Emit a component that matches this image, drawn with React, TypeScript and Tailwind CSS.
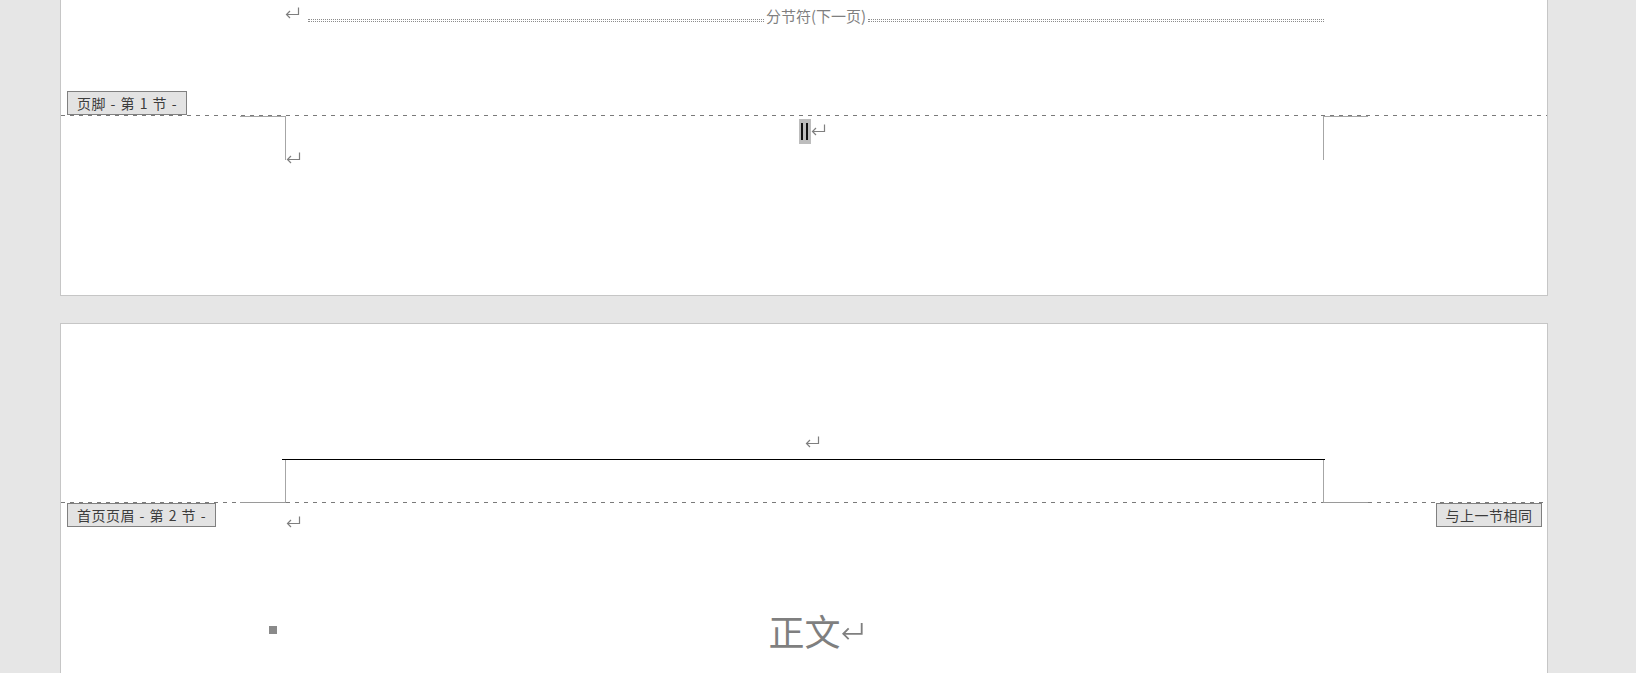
const cjk = "font-['Noto_Sans_CJK_SC','Liberation_Sans',sans-serif]";

function ReturnMark({ w = 15, h = 12 }: { w?: number; h?: number }) {
  return (
    <svg width={w} height={h} viewBox="0 0 15 12" fill="none" className="block shrink-0">
      <path d="M13.5 0.5V7.5H1.5" stroke="#7f7f7f" strokeWidth="1.2" />
      <path d="M5 4L1.5 7.5L5 11" stroke="#7f7f7f" strokeWidth="1.2" />
    </svg>
  );
}

function SectionLabel({ text, className = "" }: { text: string; className?: string }) {
  return (
    <div
      className={`flex h-[24px] shrink-0 items-center justify-center whitespace-pre border border-[#808080] bg-[#e3e3e3] text-[14px] leading-none tracking-[0.5px] text-[#3c3c3c] [word-spacing:1px] ${className}`}
    >
      {text}
    </div>
  );
}

const dashed =
  "h-[1px] bg-[repeating-linear-gradient(to_right,#7a7a7a_0_4px,transparent_4px_9px)]";

export default function App() {
  return (
    <div className={`h-[673px] w-[1636px] overflow-hidden bg-[#e6e6e6] ${cjk}`}>
      {/* page 1, bottom part with footer */}
      <div className="ml-[60px] flex h-[296px] w-[1488px] flex-col border-x border-b border-[#c6c6c6] bg-white">
        <div className="flex h-[30px] pl-[224px] pr-[223px]">
          <div className="mt-[7px]">
            <ReturnMark />
          </div>
          <div className="ml-[8px] mt-[6px] flex h-[20px] flex-1 items-start">
            <div className="mt-[13px] h-[3px] flex-1 border-y border-dotted border-[#8c8c8c]" />
            <span className="px-[2px] text-[15px] leading-[20px] text-[#7f7f7f]">分节符(下一页)</span>
            <div className="mt-[13px] h-[3px] flex-1 border-y border-dotted border-[#8c8c8c]" />
          </div>
        </div>

        <div className="mt-[61px] flex">
          <SectionLabel text="页脚 - 第 1 节 -" className="ml-[6px] w-[120px]" />
        </div>
        <div className={dashed} />

        <div className="flex h-[44px]">
          <div className="w-[179px] shrink-0" />
          <div className="w-[46px] shrink-0 border-r border-t border-[#a6a6a6]" />
          <div className="flex w-[1037px] shrink-0 flex-col">
            <div className="mt-[3px] grid grid-cols-[1fr_auto_1fr]">
              <div />
              <div className="flex h-[25px] w-[12px] items-center justify-center gap-[3px] bg-[#bdbdbd]">
                <span className="h-[17px] w-[2px] bg-[#111]" />
                <span className="h-[17px] w-[2px] bg-[#111]" />
              </div>
              <div className="mt-[5px]">
                <ReturnMark />
              </div>
            </div>
            <div className="mt-[8px]">
              <ReturnMark />
            </div>
          </div>
          <div className="w-[45px] shrink-0 border-l border-t border-[#a6a6a6]" />
        </div>
      </div>

      {/* page 2, header and body start */}
      <div className="ml-[60px] mt-[27px] flex h-[400px] w-[1488px] flex-col border-x border-t border-[#c6c6c6] bg-white">
        <div className="ml-[225px] mt-[112px] grid h-[23px] w-[1037px] grid-cols-[1fr_auto_1fr]">
          <div />
          <div />
          <div>
            <ReturnMark />
          </div>
        </div>
        <div className="ml-[221px] h-[1px] w-[1043px] bg-black" />
        <div className="flex h-[42px]">
          <div className="w-[225px] shrink-0 border-r border-[#a6a6a6]" />
          <div className="w-[1037px] shrink-0" />
          <div className="w-[45px] shrink-0 border-l border-[#a6a6a6]" />
        </div>
        <div className="flex h-[1px]">
          <div className={`w-[179px] ${dashed}`} />
          <div className="h-[1px] w-[46px] bg-[#9a9a9a]" />
          <div className={`w-[1037px] ${dashed}`} />
          <div className="h-[1px] w-[45px] bg-[#9a9a9a]" />
          <div className={`flex-1 ${dashed}`} />
        </div>
        <div className="flex">
          <SectionLabel text="首页页眉 - 第 2 节 -" className="ml-[6px] w-[149px]" />
          <div className="ml-[70px] mt-[13px]">
            <ReturnMark />
          </div>
          <div className="flex-1" />
          <SectionLabel text="与上一节相同" className="mr-[5px] w-[106px]" />
        </div>

        <div className="mt-[78px] flex items-center">
          <div className="w-[208px] shrink-0" />
          <div className="h-[8px] w-[8px] shrink-0 bg-[#8a8a8a]" />
          <div className="w-[9px] shrink-0" />
          <div className="grid w-[1037px] shrink-0 grid-cols-[1fr_auto_1fr] items-center">
            <div />
            <span className="text-[36px] leading-[48px] text-[#7f7f7f]">正文</span>
            <div className="mt-[2px]">
              <ReturnMark w={23} h={19} />
            </div>
          </div>
        </div>
      </div>
    </div>
  );
}
